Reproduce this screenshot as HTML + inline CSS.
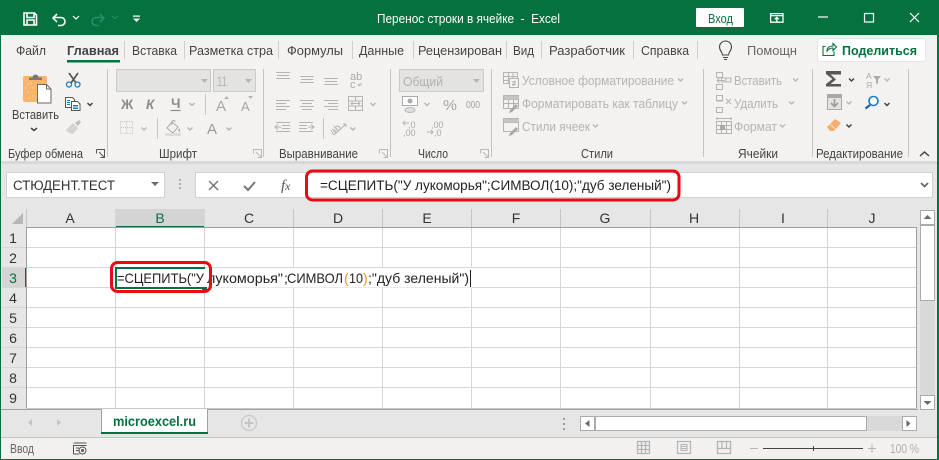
<!DOCTYPE html>
<html lang="ru"><head><meta charset="utf-8"><title>Перенос строки в ячейке - Excel</title>
<style>
html,body{margin:0;padding:0;background:#f3f2f1;width:939px;height:460px;overflow:hidden}
svg{display:block;position:absolute;left:0;top:0}
text{font-family:"Liberation Sans",sans-serif;font-size:13px;fill:#444;white-space:pre}
.d text,text.d{fill:#b4b4b4}
.k text{fill:#333}
.c{text-anchor:middle;font-size:14px}
.cr rect,.cr line{shape-rendering:crispEdges}
.ch{fill:none;stroke:#444;stroke-width:1.5}
.chd{fill:none;stroke:#b8b8b8;stroke-width:1.5}
.ic{fill:none;stroke:#b4b4b4;stroke-width:1}
.g{fill:#b4b4b4}
.cell{fill:#222;font-size:14px}
</style></head><body>
<svg width="939" height="460" viewBox="0 0 939 460" xmlns="http://www.w3.org/2000/svg">
<g class="cr">
<rect width="939" height="460" fill="#f3f2f1"/>
<rect width="939" height="35" fill="#05713f"/>
<!-- formula area -->
<rect x="1" y="161" width="937" height="3" fill="#d9d8d6"/>
<rect x="1" y="164" width="937" height="245" fill="#e6e6e6"/>
<rect x="6.5" y="172.5" width="158" height="25" fill="#fff" stroke="#d2d2d2"/>
<rect x="195.5" y="172.5" width="737" height="25" fill="#fff" stroke="#d2d2d2"/>
<!-- header highlight -->
<rect x="115" y="209" width="89" height="18" fill="#d4d4d4"/>
<rect x="115" y="226" width="89" height="2" fill="#05713f"/>
<rect x="2" y="268" width="24" height="19" fill="#d4d4d4"/>
<rect x="25" y="268" width="2" height="19" fill="#05713f"/>
<!-- grid -->
<rect x="27" y="228" width="889" height="180" fill="#fff"/>
<g stroke="#d6d6d6" stroke-width="1">
<line x1="115.5" y1="209" x2="115.5" y2="408"/><line x1="204.5" y1="209" x2="204.5" y2="408"/><line x1="293.5" y1="209" x2="293.5" y2="408"/><line x1="382.5" y1="209" x2="382.5" y2="408"/><line x1="471.5" y1="209" x2="471.5" y2="408"/><line x1="560.5" y1="209" x2="560.5" y2="408"/><line x1="650.5" y1="209" x2="650.5" y2="408"/><line x1="739.5" y1="209" x2="739.5" y2="408"/><line x1="827.5" y1="209" x2="827.5" y2="408"/>
<line x1="2" y1="247.5" x2="916" y2="247.5"/><line x1="2" y1="267.5" x2="916" y2="267.5"/><line x1="2" y1="287.5" x2="916" y2="287.5"/><line x1="2" y1="307.5" x2="916" y2="307.5"/><line x1="2" y1="327.5" x2="916" y2="327.5"/><line x1="2" y1="347.5" x2="916" y2="347.5"/><line x1="2" y1="367.5" x2="916" y2="367.5"/><line x1="2" y1="387.5" x2="916" y2="387.5"/>
</g>
<g stroke="#c4c4c4"><line x1="26.5" y1="209" x2="26.5" y2="227"/><line x1="293.5" y1="209" x2="293.5" y2="227"/><line x1="382.5" y1="209" x2="382.5" y2="227"/><line x1="471.5" y1="209" x2="471.5" y2="227"/><line x1="560.5" y1="209" x2="560.5" y2="227"/><line x1="650.5" y1="209" x2="650.5" y2="227"/><line x1="739.5" y1="209" x2="739.5" y2="227"/><line x1="827.5" y1="209" x2="827.5" y2="227"/></g>
<rect x="115" y="268" width="357" height="19.5" fill="#fff"/>
<g fill="#9e9e9e"><rect x="26" y="227" width="891" height="1"/><rect x="26" y="227" width="1" height="182"/><rect x="916" y="227" width="1" height="182"/></g>
<!-- sheet bar -->
<rect x="1" y="408" width="937" height="29" fill="#e6e6e6"/>
<rect x="1" y="409" width="937" height="1" fill="#e6e6e6"/>
<rect x="26" y="408" width="891" height="1" fill="#c8c8c8"/>
<rect x="1" y="409" width="917" height="1" fill="#a2a2a2"/>
<rect x="1" y="437" width="937" height="1" fill="#c4c4c4"/>
<rect x="1" y="438" width="937" height="21" fill="#f2f1ef"/>
<rect x="101" y="409" width="107" height="24" fill="#fff"/>
<rect x="101" y="409" width="1" height="23" fill="#a2a2a2"/><rect x="207" y="409" width="1" height="23" fill="#a2a2a2"/>
<rect x="101" y="432" width="107" height="2" fill="#05713f"/>
<!-- scrollbars -->
<rect x="920" y="296" width="15" height="100" fill="#d9d9d9"/>
<rect x="920.5" y="225.5" width="14" height="75" fill="#fff" stroke="#ababab"/>
<rect x="920.5" y="210.5" width="14" height="14" fill="#fff" stroke="#ababab"/>
<rect x="920.5" y="395.5" width="14" height="14" fill="#fff" stroke="#ababab"/>
<rect x="867" y="416" width="36" height="15" fill="#d9d9d9"/>
<rect x="580.5" y="416.5" width="14" height="14" fill="#fff" stroke="#ababab"/>
<rect x="595.5" y="416.5" width="271" height="14" fill="#fff" stroke="#ababab"/>
<rect x="902.5" y="416.5" width="14" height="14" fill="#fff" stroke="#ababab"/>
<!-- dots -->
<rect x="563" y="418" width="2" height="2" fill="#9c9c9c"/><rect x="563" y="423" width="2" height="2" fill="#9c9c9c"/><rect x="563" y="428" width="2" height="2" fill="#9c9c9c"/>
<rect x="179" y="179" width="2" height="2" fill="#b0b0b0"/><rect x="179" y="183" width="2" height="2" fill="#b0b0b0"/><rect x="179" y="187" width="2" height="2" fill="#b0b0b0"/>
<!-- borders -->
<rect x="0" y="35" width="1" height="425" fill="#05713f"/>
<rect x="937" y="35" width="2" height="425" fill="#05713f"/>
<rect x="0" y="459" width="939" height="1" fill="#05713f"/>
<!-- tab separators -->
<g fill="#cfcecc"><rect x="124" y="41" width="1" height="18"/><rect x="184" y="41" width="1" height="18"/><rect x="278" y="41" width="1" height="18"/><rect x="352" y="41" width="1" height="18"/><rect x="413" y="41" width="1" height="18"/><rect x="506" y="41" width="1" height="18"/><rect x="541" y="41" width="1" height="18"/><rect x="633" y="41" width="1" height="18"/><rect x="697" y="41" width="1" height="18"/></g>
<rect x="67" y="60" width="53" height="2.5" fill="#05713f"/>
<!-- group separators -->
<g fill="#c4c3c1"><rect x="107" y="69" width="1" height="88"/><rect x="263" y="69" width="1" height="88"/><rect x="390" y="69" width="1" height="88"/><rect x="491" y="69" width="1" height="88"/><rect x="703" y="69" width="1" height="88"/><rect x="812" y="69" width="1" height="88"/><rect x="908" y="69" width="1" height="88"/><rect x="205" y="94" width="1" height="21"/><rect x="157" y="118" width="1" height="21"/><rect x="323" y="118" width="1" height="21"/></g>
<!-- boxes -->
<rect x="116.5" y="69.5" width="94" height="22" fill="#e3e3e1" stroke="#cbcbc9"/>
<rect x="213.5" y="69.5" width="42" height="22" fill="#e3e3e1" stroke="#cbcbc9"/>
<rect x="399.5" y="69.5" width="84" height="22" fill="#e3e3e1" stroke="#cbcbc9"/>
</g>

<!-- share & login buttons -->
<rect x="817.5" y="38.5" width="108" height="23" rx="2" fill="#fff" stroke="#e6e5e3"/>
<rect x="696" y="8" width="48" height="19" rx="1" fill="#fff"/>

<!-- TITLE BAR ICONS -->
<g fill="none" stroke="#fff" stroke-width="1.6">
<path d="M24 13h10.5l2 2v10H24z"/><path d="M27 13v4.5h7V13"/><path d="M27 25v-5h7v5" />
<path d="M57 14l-4 4 4 4" /><path d="M53 17.5h8a3.8 3.8 0 0 1 0 8h-3"/>
<path d="M73 16l3 3 3-3" stroke-width="1.2"/>
</g>
<g fill="none" stroke="#2a8f6d" stroke-width="1.6"><path d="M100 14l4 4-4 4"/><path d="M104 17.5h-8a3.8 3.8 0 0 0 0 8h3"/><path d="M112 16l3 2.5 3-2.5" stroke-width="1.1"/></g>
<path d="M133 15.5h7v1.3h-7zM133 18.5h7l-3.5 3.5z" fill="#fff"/>
<g fill="none" stroke="#fff" stroke-width="1.3"><path d="M770.6 13.6h12.4v8.6h-12.4zM770.6 15.6h12.4"/><path d="M776.8 21.6v-4M774.7 19.4l2.1-2 2.1 2"/></g>
<path d="M818 17h10" stroke="#fff" stroke-width="1.2"/>
<rect x="864.5" y="13.5" width="9" height="8.5" fill="none" stroke="#fff" stroke-width="1.2"/>
<path d="M910 13l9 9M919 13l-9 9" stroke="#fff" stroke-width="1.2"/>

<text x="377" y="23" style="fill:#fff" textLength="183" lengthAdjust="spacingAndGlyphs">Перенос строки в ячейке  -  Excel</text>
<text x="708" y="23" style="fill:#05713f" textLength="25" lengthAdjust="spacingAndGlyphs">Вход</text>

<!-- TABS -->
<text x="16" y="55" textLength="30" lengthAdjust="spacingAndGlyphs">Файл</text>
<text x="67" y="55" style="fill:#444;font-weight:bold" textLength="52" lengthAdjust="spacingAndGlyphs">Главная</text>
<text x="132" y="55" textLength="45" lengthAdjust="spacingAndGlyphs">Вставка</text>
<text x="189" y="55" textLength="84" lengthAdjust="spacingAndGlyphs">Разметка стра</text>
<text x="287" y="55" textLength="56" lengthAdjust="spacingAndGlyphs">Формулы</text>
<text x="359" y="55" textLength="45" lengthAdjust="spacingAndGlyphs">Данные</text>
<text x="418" y="55" textLength="84" lengthAdjust="spacingAndGlyphs">Рецензирован</text>
<text x="513" y="55" textLength="21" lengthAdjust="spacingAndGlyphs">Вид</text>
<text x="549" y="55" textLength="76" lengthAdjust="spacingAndGlyphs">Разработчик</text>
<text x="641" y="55" textLength="48" lengthAdjust="spacingAndGlyphs">Справка</text>
<text x="747" y="55" style="fill:#666" textLength="50" lengthAdjust="spacingAndGlyphs">Помощн</text>
<g fill="none" stroke="#444" stroke-width="1.1"><path d="M722.5 55c0-3-3-4-3-8a6 6 0 0 1 12 0c0 4-3 5-3 8z"/><path d="M723 57.5h5M724 59.5h3"/></g>
<g fill="none" stroke="#05713f" stroke-width="1.1"><path d="M825.5 46.500h-2.500v9h11v-4"/><path d="M827 51c0-3 2-5 6-5v-2.500l3.500 3.500-3.500 3.500v-2.500c-2.500 0-4.500 1-6 3z"/></g>
<text x="842" y="55" style="fill:#05713f;font-weight:bold" textLength="75" lengthAdjust="spacingAndGlyphs">Поделиться</text>

<!-- CLIPBOARD -->
<path d="M23 78a2 2 0 0 1 2-2h20a2 2 0 0 1 2 2v24H25a2 2 0 0 1-2-2z" fill="#f8b36c"/>
<g fill="#fbd9b4"><circle cx="28" cy="84" r=".8"/><circle cx="33" cy="88" r=".8"/><circle cx="28" cy="92" r=".8"/><circle cx="33" cy="96" r=".8"/><circle cx="29" cy="98" r=".8"/><circle cx="31" cy="83" r=".8"/><circle cx="26" cy="88" r=".8"/></g>
<path d="M29 80v-2.500h3.500a3 3 0 0 1 6 0h3.500v2.500z" fill="#7a7674"/>
<path d="M37.500 84.500h9l4.500 4.500v14h-13.500z" fill="#fff" stroke="#6c6866"/><path d="M46.500 84.500v4.500h4.500" fill="none" stroke="#6c6866"/>
<text x="12" y="119" textLength="47" lengthAdjust="spacingAndGlyphs">Вставить</text>
<path class="ch" d="M31 128l3 2.500 3-2.500" stroke-width="1.2"/>
<!-- scissors -->
<path d="M69 73l7 10M78 73l-7 10" stroke="#5a5654" stroke-width="1.7" fill="none"/>
<circle cx="69" cy="84.500" r="2.500" fill="none" stroke="#1b7cc4" stroke-width="1.300"/><circle cx="77.500" cy="84.500" r="2.500" fill="none" stroke="#1b7cc4" stroke-width="1.300"/>
<!-- copy -->
<g fill="#fff" stroke="#5a5654"><path d="M65.500 97.500h7l2 2v8h-9z"/><path d="M71.500 101.500h6l2.500 2.500v6.500h-8.500z"/></g>
<path d="M73 105.500h5M73 107h5M73 108.500h5M67 100.500h3M67 102.500h3M67 104.500h3" stroke="#1b7cc4" stroke-width="1"/>
<path class="ch" d="M87.500 103l2.500 2.500 2.500-2.500"/>
<!-- brush -->
<path d="M66 130l7-7 5 5-5 6c-2 0-6-2-7-4z" fill="#d4d3d1"/><path d="M75 123l4-3 2 2-3 4z" fill="#bdbcba"/>

<!-- launcher -->
<g fill="none" stroke="#555" stroke-width="1"><path d="M96.500 149.500h8v8h-1M96.500 149.500v4"/><path d="M99 152l5 5M104.500 153.500v4h-4"/></g>
<g fill="none" stroke="#b8b8b8" stroke-width="1"><path d="M253.500 149.500h8v8M253.500 149.500v4M256 152l5 5M261.500 153.500v4h-4"/><path d="M379.500 149.500h8v8M379.500 149.500v4M382 152l5 5M387.500 153.500v4h-4"/><path d="M480.500 149.500h8v8M480.500 149.500v4M483 152l5 5M488.500 153.500v4h-4"/></g>

<!-- labels -->
<text x="8" y="158" textLength="75" lengthAdjust="spacingAndGlyphs">Буфер обмена</text>
<text x="159" y="158" textLength="38" lengthAdjust="spacingAndGlyphs">Шрифт</text>
<text x="279" y="158" textLength="79" lengthAdjust="spacingAndGlyphs">Выравнивание</text>
<text x="418" y="158" textLength="30" lengthAdjust="spacingAndGlyphs">Число</text>
<text x="581" y="158" textLength="32" lengthAdjust="spacingAndGlyphs">Стили</text>
<text x="738" y="158" textLength="40" lengthAdjust="spacingAndGlyphs">Ячейки</text>
<text x="816" y="158" textLength="87" lengthAdjust="spacingAndGlyphs">Редактирование</text>
<path class="ch" d="M920 156l4.500-4 4.500 4" stroke-width="1.200"/>

<!-- FONT GROUP -->
<path class="g" d="M201 79h7l-3.500 4zM245 79h7l-3.500 4zM473 79h7l-3.500 4z"/>
<g class="d">
<text x="217" y="86" style="font-size:14px" textLength="10" lengthAdjust="spacingAndGlyphs">11</text>
<text x="121" y="109" style="font-weight:bold;font-size:13.500px;fill:#8c8c8c">Ж</text>
<text x="146" y="109" style="font-weight:bold;font-style:italic;font-size:13.500px;fill:#8c8c8c">К</text>
<text x="171" y="108" style="font-weight:bold;font-size:13.500px;fill:#8c8c8c">Ч</text>
<text x="216" y="111" style="font-size:15px;fill:#a6a6a6">A</text>
<text x="241" y="111" style="font-size:13px;fill:#a6a6a6">A</text>
<text x="207" y="134" style="font-size:15px;fill:#9a9a9a">A</text>
</g>
<path d="M170.500 110.500h10" stroke="#8c8c8c" stroke-width="1.200"/>
<path class="g" d="M224 99l2.500-3 2.500 3zM248 96h5l-2.500 3z"/>
<g class="chd"><path d="M189.500 103l2.500 2.500 2.500-2.500M141.500 127.500l2.500 2.500 2.500-2.500M187.500 127.500l2.500 2.500 2.500-2.500M226.500 127.500l2.500 2.500 2.500-2.500"/></g>
<rect x="120.500" y="121.500" width="12" height="12" fill="none" stroke="#c4c4c4" stroke-dasharray="1 1"/><path d="M126.500 122v11M121 127.500h11" stroke="#c4c4c4" stroke-dasharray="1 1"/>
<path d="M172 122l6 5-5 6-6-5z" fill="#f3f2f1" stroke="#aaa"/><path d="M172 125v-3a1.500 1.500 0 0 1 3 0" stroke="#aaa" fill="none"/><path d="M179 128c1 1.500 2 3 0 4-1-1-1-2.500 0-4z" fill="#aaa"/><rect x="165" y="133" width="16" height="3" fill="#dcdcda"/>

<!-- ALIGN -->
<g class="ic">
<path d="M276 72.500h14M277 75.500h12M276 78.500h14"/><path d="M300 76.500h14M301 79.500h12M300 82.500h14"/><path d="M324 78.500h14M325 81.500h12M324 84.500h14"/>
<path d="M276 100.500h14M276 103.500h10M276 106.500h14M276 109.500h10"/><path d="M300 100.500h14M302 103.500h10M300 106.500h14M302 109.500h10"/><path d="M324 100.500h14M328 103.500h10M324 106.500h14M328 109.500h10"/>
<path d="M276 122.500h14M282 125.500h8M282 128.500h8M276 131.500h14M281 127h-6M278 124.500l-3 2.500 3 2.500"/>
<path d="M299 122.500h14M299 125.500h8M299 128.500h8M299 131.500h14M308 127h6M311 124.500l3 2.500-3 2.500"/>
<rect x="348.500" y="96.500" width="14" height="14"/><path d="M348.500 101h14M348.500 106h14M355.500 96.500v4M355.500 106v4M351 103.500h9M352.500 102l-1.500 1.500 1.500 1.500M358.500 102l1.500 1.500-1.500 1.500"/>
</g>
<text x="350" y="80" style="font-size:11px;fill:#aaa">ab</text>
<text x="350" y="88" style="font-size:11px;fill:#aaa">c</text>
<path d="M358 85h3v-2M358 85l1.500-1.200M358 85l1.500 1.200" class="ic"/>
<text x="329" y="132" transform="rotate(-40 336 128)" style="font-size:10px;fill:#aaa">ab</text>
<path d="M335 134l11-10M346 124h-3M346 124v3" class="ic"/>
<g class="chd"><path d="M370.500 103l2.500 2.500 2.500-2.500M350.500 127.500l2.500 2.500 2.500-2.500"/></g>

<!-- NUMBER -->
<text x="403" y="86" style="font-size:13px;fill:#b0b0b0" textLength="40" lengthAdjust="spacingAndGlyphs">Общий</text>
<rect x="402.500" y="96.500" width="15" height="9" fill="#fff" stroke="#aaa"/><circle cx="410" cy="101" r="2.500" fill="#aaa"/><ellipse cx="410" cy="110" rx="5" ry="2.500" fill="#dedddb" stroke="#bbb"/>
<path class="chd" d="M424.500 103l2.500 2.500 2.500-2.500"/>
<text x="443" y="110" style="font-size:15px;fill:#a6a6a6" textLength="14" lengthAdjust="spacingAndGlyphs">%</text>
<text x="466" y="108" style="font-size:10.500px;fill:#a0a0a0" textLength="14" lengthAdjust="spacingAndGlyphs">000</text>
<text x="408" y="128" style="font-size:9px;fill:#aaa">,0</text><text x="403" y="136" style="font-size:9px;fill:#aaa">,00</text><path class="ic" d="M409 123h-6M405 121l-2 2 2 2"/>
<text x="431" y="128" style="font-size:9px;fill:#aaa">,00</text><text x="434" y="136" style="font-size:9px;fill:#aaa">,0</text><path class="ic" d="M427 132h6M431 130l2 2-2 2"/>

<!-- STYLES -->
<g class="ic">
<path d="M503.500 72.500h14v6"/><path d="M503.500 72.500v11h5M503.500 76.500h14M503.500 80.500h5M508.500 72.500v11M513 72.500v6"/><rect x="509.500" y="78.500" width="9" height="9" fill="#f3f2f1"/><path d="M512 82h4M512 84.500h4M515 80.500l-2 5.500"/>
<rect x="503.500" y="95.500" width="15" height="13"/><path d="M503.500 99.500h15M503.500 103.500h15M508.500 95.500v13M513.500 95.500v13"/>
<rect x="503.500" y="118.500" width="15" height="13"/><path d="M503.500 122.500h15"/>
</g>
<rect x="504" y="96" width="15" height="3.500" fill="#c4c4c4"/><rect x="504" y="119" width="15" height="3.500" fill="#c4c4c4"/>
<path d="M510 110l6-6 2 2-6 6-3 1zM510 133l6-6 2 2-6 6-3 1z" fill="#a8a8a8"/>
<text x="522" y="85" style="fill:#b4b4b4" textLength="152" lengthAdjust="spacingAndGlyphs">Условное форматирование</text>
<text x="522" y="108" style="fill:#b4b4b4" textLength="156" lengthAdjust="spacingAndGlyphs">Форматировать как таблицу</text>
<text x="522" y="131" style="fill:#b4b4b4" textLength="68" lengthAdjust="spacingAndGlyphs">Стили ячеек</text>
<g class="chd"><path d="M678 78.500l2.500 2.500 2.500-2.500M682 101.500l2.500 2.500 2.500-2.500M593 124.500l2.500 2.500 2.500-2.500"/></g>

<!-- CELLS -->
<g class="ic">
<path d="M716.500 72.500h6v5h-6zM716.500 84.500h6v5h-6zM721.500 78h9.500v4h-9.500zM726 78v4M717 80.500h8M719.500 78l-2.500 2.500 2.500 2.500" />
<path d="M716.500 95.500h6v5h-6zM716.500 107.500h6v5h-6zM722.500 96v5h-6M726 99l5 5M731 99l-5 5"/>
<rect x="716.500" y="121.500" width="15" height="12"/><path d="M716.500 125.500h15M716.500 129.500h15M721.500 121.500v12M726.500 121.500v12M716 118.500h16M717 117v3M731 117v3"/>
</g>
<rect x="720" y="125" width="5" height="5" fill="#a8a8a8"/>
<text x="734" y="85" style="fill:#b4b4b4" textLength="48" lengthAdjust="spacingAndGlyphs">Вставить</text>
<text x="734" y="108" style="fill:#b4b4b4" textLength="44" lengthAdjust="spacingAndGlyphs">Удалить</text>
<text x="734" y="131" style="fill:#b4b4b4" textLength="43" lengthAdjust="spacingAndGlyphs">Формат</text>
<g class="chd"><path d="M793 78.500l2.500 2.500 2.500-2.500M789 101.500l2.500 2.500 2.500-2.500M780 124.500l2.500 2.500 2.500-2.500"/></g>

<!-- EDITING -->
<path d="M826 71h15v3.500h-10.500l5.500 5-5.500 4.500h10.500v2.500h-15v-2.500l6.500-5-6.500-5z" fill="#5a5654"/>
<path class="ch" d="M849 78.500l2.500 2.500 2.500-2.500M884.500 103l2.500 2.500 2.500-2.500M846.500 124.500l2.500 2.500 2.500-2.500"/>
<text x="866" y="79" style="font-size:8.500px;fill:#aaa">А</text><text x="866" y="88" style="font-size:8.500px;fill:#aaa">Я</text>
<path d="M873 76h8l-3 3.500v4.500l-2-1v-3.500z" fill="#aaa"/>
<path class="chd" d="M884.500 78.500l2.500 2.500 2.500-2.500M846.500 101.500l2.500 2.500 2.500-2.500"/>
<rect x="827.500" y="94.500" width="14" height="15" fill="#e2e2e0" stroke="#aaa"/><rect x="828" y="95" width="13" height="3" fill="#a8a8a8"/><path d="M834.500 99v7M831 103l3.500 3.500 3.500-3.500" fill="none" stroke="#999" stroke-width="1.600"/>
<circle cx="873.500" cy="101" r="4.500" fill="#fff" stroke="#1b7cc4" stroke-width="1.600"/><path d="M870 105l-4.500 3.500" stroke="#1262a8" stroke-width="2.200"/>
<path d="M827 127l8-8 6 4-7 8h-4z" fill="#f5ae6c"/><path d="M830 124l5 5" stroke="#fbd9b4" stroke-width="1"/>

<!-- FORMULA BAR -->
<text x="13" y="190" style="fill:#333;font-size:13.500px" textLength="102" lengthAdjust="spacingAndGlyphs">СТЮДЕНТ.ТЕСТ</text>
<path d="M151 182h8l-4 4z" fill="#6e6a68"/>
<path d="M209 181l9 9M218 181l-9 9" stroke="#777" stroke-width="1.500" fill="none"/>
<path d="M244 186l4 4 7-8" stroke="#777" stroke-width="2" fill="none"/>
<text x="281" y="190" style="font-family:'Liberation Serif',serif;font-style:italic;font-size:15px;fill:#555">f</text><text x="285" y="190" style="font-family:'Liberation Serif',serif;font-style:italic;font-size:12px;fill:#555">x</text>
<text x="320" y="190" style="fill:#222;font-size:13.500px" textLength="351" lengthAdjust="spacingAndGlyphs">=СЦЕПИТЬ("У лукоморья";СИМВОЛ(10);"дуб зеленый")</text>
<path d="M921 183l3.500 3.500 3.500-3.500" fill="none" stroke="#666" stroke-width="1.800"/>

<!-- HEADERS -->
<path d="M23 213v11H12z" fill="#b6b6b6"/>
<text class="c" x="70" y="223" style="fill:#333">A</text><text class="c" x="160" y="223" style="fill:#05713f">B</text><text class="c" x="249" y="223" style="fill:#333">C</text><text class="c" x="338" y="223" style="fill:#333">D</text><text class="c" x="427" y="223" style="fill:#333">E</text><text class="c" x="516" y="223" style="fill:#333">F</text><text class="c" x="605" y="223" style="fill:#333">G</text><text class="c" x="694" y="223" style="fill:#333">H</text><text class="c" x="783" y="223" style="fill:#333">I</text><text class="c" x="872" y="223" style="fill:#333">J</text>
<text class="c" x="13" y="243" style="fill:#333">1</text><text class="c" x="13" y="263" style="fill:#333">2</text><text class="c" x="13" y="283" style="fill:#05713f">3</text><text class="c" x="13" y="303" style="fill:#333">4</text><text class="c" x="13" y="323" style="fill:#333">5</text><text class="c" x="13" y="343" style="fill:#333">6</text><text class="c" x="13" y="363" style="fill:#333">7</text><text class="c" x="13" y="383" style="fill:#333">8</text><text class="c" x="13" y="403" style="fill:#333">9</text>

<!-- ACTIVE CELL -->
<g class="cr"><rect x="115" y="267" width="90" height="2" fill="#05713f"/><rect x="115" y="287" width="90" height="2" fill="#05713f"/><rect x="115" y="267" width="2" height="22" fill="#05713f"/><rect x="202" y="287" width="5" height="3" fill="#05713f"/></g>
<text class="cell" x="117" y="283" textLength="87" lengthAdjust="spacingAndGlyphs">=СЦЕПИТЬ("У</text>
<text class="cell" x="207" y="283" textLength="76" lengthAdjust="spacingAndGlyphs">лукоморья"</text>
<text class="cell" x="284" y="283">;</text>
<text class="cell" x="287" y="283" textLength="56" lengthAdjust="spacingAndGlyphs">СИМВОЛ</text>
<text class="cell" x="344" y="283" style="fill:#e8912d">(</text>
<text class="cell" x="349" y="283" textLength="14" lengthAdjust="spacingAndGlyphs">10</text>
<text class="cell" x="363" y="283" style="fill:#e8912d">)</text>
<text class="cell" x="368" y="283" textLength="101" lengthAdjust="spacingAndGlyphs">;"дуб зеленый")</text>
<rect x="470" y="270" width="1" height="17" fill="#222"/>

<!-- RED -->
<rect x="111.500" y="262.500" width="99" height="29" rx="6" fill="none" stroke="#ea0a14" stroke-width="3"/>
<rect x="306.500" y="171" width="372.500" height="29" rx="6" fill="none" stroke="#ea0a14" stroke-width="3"/>

<!-- SHEET TAB -->
<text x="113" y="426" style="fill:#05713f;font-weight:bold;font-size:14px" textLength="83" lengthAdjust="spacingAndGlyphs">microexcel.ru</text>
<path d="M32 419v7l-4-3.500zM57 419v7l4-3.500z" fill="#c4c4c4"/>
<circle cx="249" cy="423" r="7.500" fill="none" stroke="#c8c8c8" stroke-width="1.300"/><path d="M249 418.500v9M244.500 423h9" stroke="#c4c4c4" stroke-width="2"/>
<path d="M585 423.500l4.500-3.500v7zM906.500 420v7l4-3.500z" fill="#6e6a68"/>
<path d="M923.500 219l4-4 4 4zM923.500 401h8l-4 4z" fill="#6e6a68"/>

<!-- STATUS -->
<text x="10" y="453" style="fill:#666" textLength="24" lengthAdjust="spacingAndGlyphs">Ввод</text>
<g fill="none" stroke="#555" stroke-width="1"><path d="M73.500 443h13M73.500 445.500h13M73.500 445v9h6"/><path d="M76 448h3M76 450.500h3"/><circle cx="82.500" cy="450.500" r="3.500"/></g><circle cx="82.500" cy="450.500" r="1.500" fill="#555"/>
<g fill="none" stroke="#b4b4b4" stroke-width="1.300">
<rect x="637.500" y="441.500" width="12" height="12"/><path d="M641.500 441.500v12M645.500 441.500v12M637.500 445.500h12M637.500 449.500h12"/>
<rect x="677.500" y="441.500" width="13" height="12"/><path d="M681 444.500h6v6h-6zM681 446.500h6M681 448.500h6" stroke-width="1"/>
<rect x="717.500" y="441.500" width="13" height="12"/><path d="M722 441.500v7h4.500v-7M717.500 448.500h13" stroke-width="1.200"/>
</g>
<path d="M750 448.500h8M868 448.500h8M872 444.500v8" stroke="#b4b4b4" stroke-width="1" fill="none"/>
<rect x="763" y="448" width="100" height="1" fill="#444"/><rect x="813" y="446" width="1" height="5" fill="#444"/>
<text x="890" y="453" style="fill:#b0b0b0" textLength="29" lengthAdjust="spacingAndGlyphs">100 %</text>
</svg>
</body></html>
